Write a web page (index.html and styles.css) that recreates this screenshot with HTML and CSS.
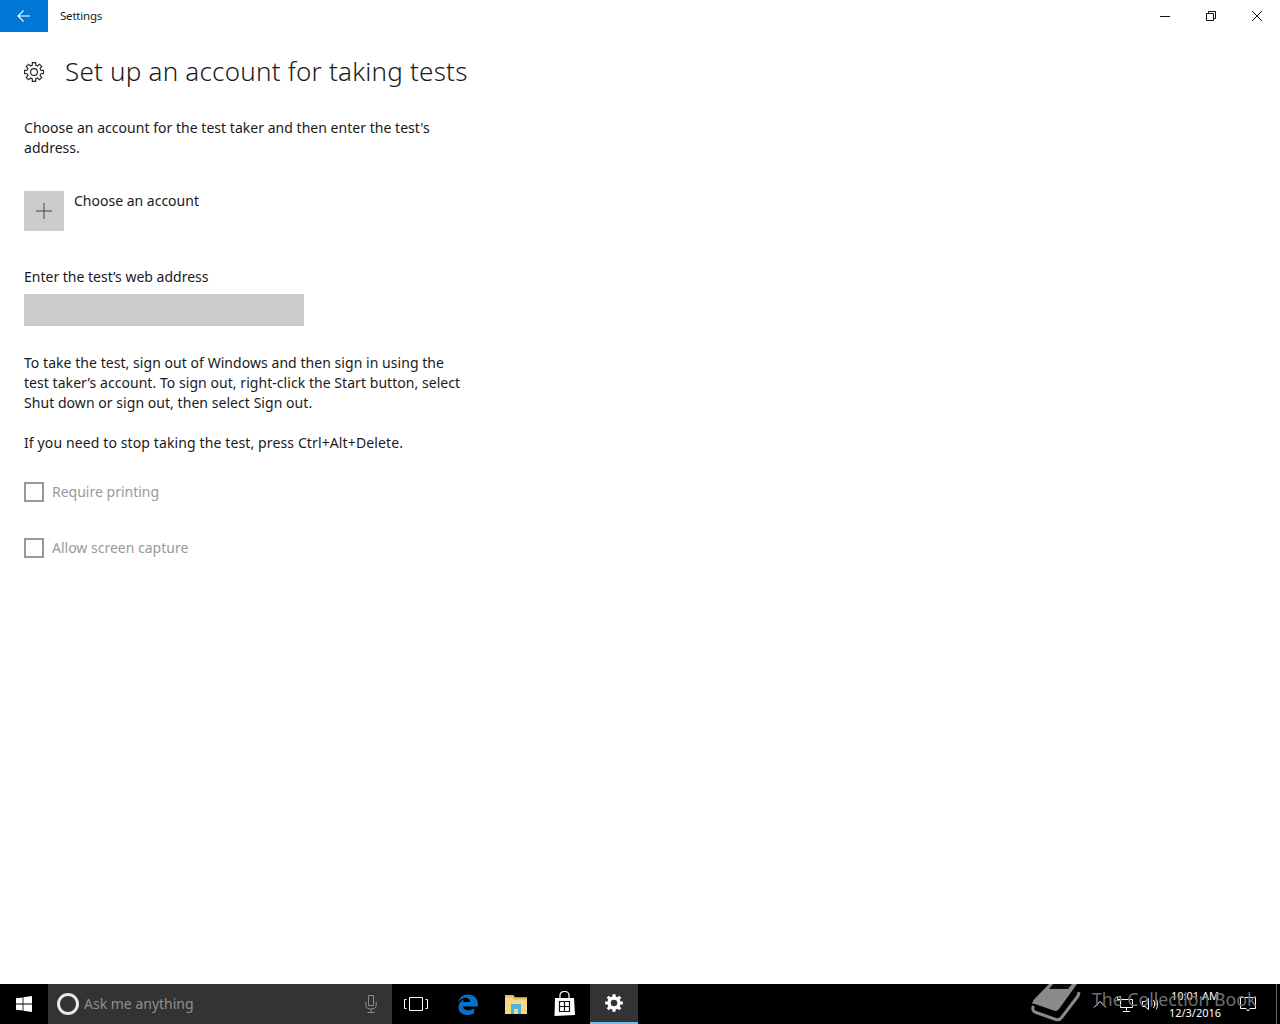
FILE: index.html
```html
<!DOCTYPE html>
<html lang="en">
<head>
    <meta charset="UTF-8">
    <title>Settings</title>
    <link rel="stylesheet" href="styles.css">
</head>
<body>
    <div class="window">
        <div class="titlebar">
            <button class="back-btn">
                <svg width="16" height="16" viewBox="0 0 16 16"><path d="M14 8H2.5M7.5 2.5 2 8l5.5 5.5" fill="none" stroke="#fff" stroke-width="1.1"/></svg>
            </button>
            <span class="app-name">Settings</span>
            <div class="win-controls">
                <span class="win-btn">
                    <svg width="12" height="12" viewBox="0 0 12 12"><path d="M1 6.5h10" stroke="#111" stroke-width="1"/></svg>
                </span>
                <span class="win-btn">
                    <svg width="12" height="12" viewBox="0 0 12 12"><path d="M1.5 3.5h7v7h-7zM3.5 3.5v-2h7v7h-2" fill="none" stroke="#111" stroke-width="1"/></svg>
                </span>
                <span class="win-btn">
                    <svg width="12" height="12" viewBox="0 0 12 12"><path d="M1 1l10 10M11 1 1 11" stroke="#111" stroke-width="1"/></svg>
                </span>
            </div>
        </div>

        <main class="content">
            <header class="page-head">
                <svg class="gear" width="20" height="20" viewBox="-.5 -.5 21 21">
                    <path d="M8.2 2.8 8.26.15h3.48l.06 2.65 2.01.86 1.93-1.85 2.45 2.45-1.85 1.93.84 2.02 2.67.05v3.48l-2.67.05-.84 2.02 1.85 1.93-2.45 2.45-1.93-1.85-2.01.86-.06 2.65H8.26l-.06-2.65-2.01-.86-1.93 1.85-2.45-2.45 1.85-1.93-.84-2.02-2.67-.05V8.26l2.67-.05.84-2.02-1.85-1.93 2.45-2.45 1.93 1.85z" fill="none" stroke="#222" stroke-width="1.2"/>
                    <circle cx="10" cy="10" r="3.6" fill="none" stroke="#222" stroke-width="1.2"/>
                </svg>
                <h1>Set up an account for taking tests</h1>
            </header>

            <p class="intro">Choose an account for the test taker and then enter the test's address.</p>

            <div class="account-row">
                <span class="plus-tile">
                    <svg width="16" height="16" viewBox="0 0 16 16"><path d="M8 0v16M0 8h16" stroke="#444" stroke-width="1"/></svg>
                </span>
                <span class="account-label">Choose an account</span>
            </div>

            <label class="field-label">Enter the test’s web address</label>
            <div class="address-input"></div>

            <p class="info">To take the test, sign out of Windows and then sign in using the test taker’s account. To sign out, right-click the Start button, select Shut down or sign out, then select Sign out.</p>
            <p class="info stop-note">If you need to stop taking the test, press Ctrl+Alt+Delete.</p>

            <div class="check-row">
                <span class="check-box"></span>
                <span>Require printing</span>
            </div>
            <div class="check-row">
                <span class="check-box"></span>
                <span>Allow screen capture</span>
            </div>
        </main>

        <footer class="taskbar">
            <span class="start-btn">
                <svg width="16" height="16" viewBox="0 0 16 16"><path d="M0 2.3 6.6 1.4v6.2H0zM7.4 1.3 16 0v7.6H7.4zM0 8.4h6.6v6.2L0 13.7zM7.4 8.4H16V16l-8.6-1.3z" fill="#fff"/></svg>
            </span>
            <div class="search-box">
                <span class="cortana"></span>
                <span class="search-text">Ask me anything</span>
                <svg class="mic" width="12" height="18" viewBox="0 0 12 18"><path d="M3.5.5h5v10h-5zM.8 7v3.5C.8 13 3 14 6 14s5.2-1 5.2-3.5V7M6 14v3M2.5 17.5h7" fill="none" stroke="#8c8c8c" stroke-width="1"/></svg>
            </div>
            <div class="task-icons">
                <span class="task-icon task-view">
                    <svg width="24" height="14" viewBox="0 0 24 14"><path d="M5.5.5h13v13h-13zM2.5 2.5H.5v9h2M21.5 2.5h2v9h-2" fill="none" stroke="#fff" stroke-width="1"/></svg>
                </span>
                <span class="task-icon">
                    <svg width="21" height="23" viewBox="0 0 21 23"><path d="M11 1.5C6 1.5 2.5 4.5 1 9c2.5-3 5-4.3 7.5-4.3 2.8 0 4.5 1.6 4.7 4.3H6c.3-1.3 1-2.300 2-3C4 7.5 1.5 10.8 1.5 14.5c0 4.5 3.700 7.500 8.700 7.500 2.700 0 5-.6 7-1.800v-4.700c-2 1.200-4 1.800-6 1.800-2.800 0-4.900-1.300-5.200-3.800h14.800c.2-1 .2-1.800.2-2.700C20.500 4.800 16.500 1.500 11 1.500z" fill="#0a6fc9"/></svg>
                </span>
                <span class="task-icon">
                    <svg width="22" height="20" viewBox="0 0 22 20"><path d="M0 1h8l2 2.500h12V20H0z" fill="#f5d988"/><path d="M0 1h8l2 2.500h12v2H9L7 3.500H0z" fill="#e8be58"/><path d="M6 10h10v10h-3v-5H9v5H6z" fill="#4fb3e0"/></svg>
                </span>
                <span class="task-icon store-icon">
                    <svg width="21" height="25" viewBox="0 0 21 25"><path d="M1 7h19l1 17-20.500 1z" fill="#fff"/><path d="M6 8V4c0-2 2-3.500 4.500-3.500S15 2 15 4v4" fill="none" stroke="#fff" stroke-width="1.2"/><path d="M5.500 10.500h10v10h-10zM10.500 10.500v10M5.500 15.500h10" fill="none" stroke="#111" stroke-width="1.2"/></svg>
                </span>
                <span class="task-icon active">
                    <svg width="18" height="18" viewBox="0 0 20 20"><path d="M8.2 2.8 8.26.15h3.48l.06 2.65 2.01.86 1.93-1.85 2.45 2.45-1.85 1.93.84 2.02 2.67.05v3.48l-2.67.05-.84 2.02 1.85 1.93-2.45 2.45-1.93-1.85-2.01.86-.06 2.65H8.26l-.06-2.65-2.01-.86-1.93 1.85-2.45-2.45 1.85-1.93-.84-2.02-2.67-.05V8.26l2.67-.05.84-2.02-1.85-1.93 2.45-2.45 1.93 1.85z" fill="#fff"/><circle cx="10" cy="10" r="3.6" fill="#333"/></svg>
                </span>
            </div>

            <div class="tray">
                <svg width="14" height="8" viewBox="0 0 14 8"><path d="M1 7.500 7 1.500l6 6" fill="none" stroke="#fff" stroke-width="1"/></svg>
                <svg width="16" height="16" viewBox="0 0 16 16"><path d="M3.500 3.500h12v8h-12zM9.500 11.500v3M6 15.500h7" fill="none" stroke="#fff" stroke-width="1"/><path d="M.5.500h3v3h-3z" fill="#000" stroke="#fff" stroke-width="1"/></svg>
                <svg width="17" height="14" viewBox="0 0 17 14"><path d="M.5 4.500h2.500L6.500 1.500v11L3 9.500H.5zM9 4.500c1 1.500 1 3.500 0 5M11.500 3c1.500 2.500 1.500 5.500 0 8M14 1.500c2.200 3.500 2.200 7.500 0 11" fill="none" stroke="#fff" stroke-width="1"/></svg>
                <div class="clock">
                    <span>10:01 AM</span>
                    <span>12/3/2016</span>
                </div>
                <svg width="16" height="16" viewBox="0 0 16 16"><path d="M.5 1.500h15v11H10L8 15l-2-2.500H.5z" fill="none" stroke="#fff" stroke-width="1"/></svg>
                <span class="show-desktop"></span>
            </div>
        </footer>

        <!-- watermark sits on top of the tray -->
        <div class="watermark">
            <svg width="52" height="40" viewBox="0 0 52 40">
                <path d="M19 0h28L29 25c-1.500 2-3 2.500-5.500 1.500L5 20c-2-.7-3.500 0-3 1 0-1 .5-3 1.500-5z" fill="#8a8a8a"/>
                <path d="M23 0h19l-4 5H19z" fill="#0a0a0a"/>
                <path d="M3.500 22c-1.500 3-.5 5.500 2.500 6.500L26 35.500c2.500.8 4 .3 5.500-1.800L48 12l1-4" fill="none" stroke="#8a8a8a" stroke-width="3"/>
            </svg>
            <span class="watermark-text">The Collection Book</span>
        </div>
    </div>
</body>
</html>
```

FILE: styles.css
```css
* {
    margin: 0;
    padding: 0;
    box-sizing: border-box;
}

body {
    font-family: 'Noto Sans', 'Open Sans', sans-serif;
    font-size: 14px;
    line-height: 20px;
    color: #1a1a1a;
    background: #fff;
}

.window {
    position: relative;
    width: 1280px;
    height: 1024px;
    display: flex;
    flex-direction: column;
    overflow: hidden;
}

/* Title bar */
.titlebar {
    height: 32px;
    display: flex;
    align-items: center;
}

.back-btn {
    width: 48px;
    height: 32px;
    border: none;
    background: #0078d7;
    display: flex;
    align-items: center;
    justify-content: center;
}

.app-name {
    margin-left: 12px;
    font-size: 11.5px;
    letter-spacing: -0.2px;
}

.win-controls {
    margin-left: auto;
    display: flex;
}

.win-btn {
    width: 46px;
    height: 32px;
    display: flex;
    align-items: center;
    justify-content: center;
}

/* Page */
.content {
    flex: 1;
    padding: 0 24px;
}

.page-head {
    display: flex;
    align-items: center;
    gap: 21px;
    height: 40px;
    margin-top: 20px;
}

h1 {
    font-size: 26px;
    font-weight: 300;
    line-height: 38px;
    padding-bottom: 2px;
    letter-spacing: 0.22px;
}

.intro {
    width: 440px;
    margin-top: 26px;
    letter-spacing: 0.03px;
}

.account-row {
    display: flex;
    gap: 10px;
    margin-top: 33px;
}

.plus-tile {
    width: 40px;
    height: 40px;
    background: #ccc;
    display: flex;
    align-items: center;
    justify-content: center;
}

.field-label {
    display: block;
    margin-top: 36px;
}

.address-input {
    width: 280px;
    height: 32px;
    margin-top: 7px;
    background: #ccc;
}

.info {
    width: 440px;
    margin-top: 27px;
    letter-spacing: 0.05px;
}

.stop-note {
    margin-top: 20px;
    letter-spacing: 0.12px;
}

.check-row {
    display: flex;
    align-items: center;
    gap: 8px;
    height: 20px;
    margin-top: 29px;
    color: #999;
}

.check-row + .check-row {
    margin-top: 36px;
}

.check-box {
    width: 20px;
    height: 20px;
    border: 2px solid #999;
}

/* Taskbar */
.taskbar {
    height: 40px;
    background: #000;
    display: flex;
    color: #fff;
}

.start-btn {
    width: 48px;
    display: flex;
    align-items: center;
    justify-content: center;
}

.search-box {
    width: 344px;
    background: #333;
    display: flex;
    align-items: center;
    padding: 0 15px 0 9px;
}

.cortana {
    width: 22px;
    height: 22px;
    border: 3px solid #e8e8e8;
    border-radius: 50%;
}

.search-text {
    margin-left: 5px;
    color: #8f8f8f;
}

.mic {
    margin-left: auto;
}

.task-icons {
    display: flex;
    gap: 1px;
}

.task-icon {
    width: 48px;
    display: flex;
    align-items: center;
    justify-content: center;
}

.task-view {
    width: 50px;
    padding-right: 2px;
}

.store-icon {
    padding-right: 2px;
    padding-bottom: 2px;
}

.task-icon.active {
    background: #333;
    border-bottom: 2px solid #76b9ed;
}

.tray {
    margin-left: auto;
    display: flex;
    align-items: center;
}

.tray svg:nth-child(1) { margin-right: 10px; }
.tray svg:nth-child(2) { margin-right: 8px; }
.tray svg:nth-child(3) { margin-left: 1px; }

.clock {
    width: 72px;
    margin-right: 9px;
    display: flex;
    flex-direction: column;
    align-items: center;
    font-size: 11px;
    line-height: 17px;
}

.show-desktop {
    width: 1px;
    height: 40px;
    margin-left: 20px;
    margin-right: 3px;
    background: #666;
}

/* Watermark */
.watermark {
    position: absolute;
    left: 1030px;
    top: 984px;
    display: flex;
    align-items: flex-start;
    gap: 10px;
    color: #6e6e6e;
    pointer-events: none;
}

.watermark-text {
    font-size: 17.7px;
    line-height: 30px;
}
```
